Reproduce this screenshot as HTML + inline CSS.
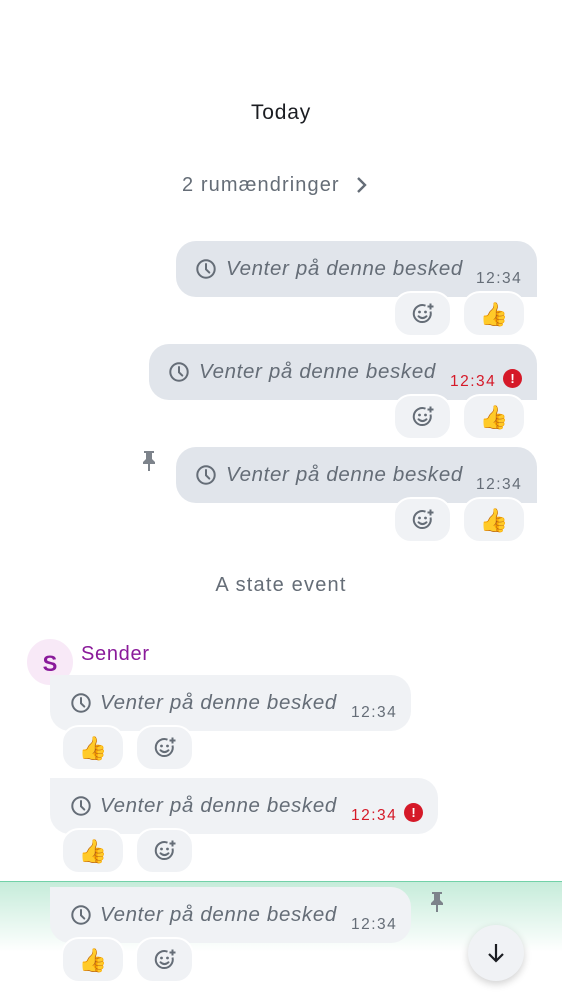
<!DOCTYPE html>
<html><head><meta charset="utf-8"><style>
*{margin:0;padding:0;box-sizing:border-box}
body{width:562px;height:1000px;background:#fff;position:relative;overflow:hidden;font-family:"Liberation Sans",sans-serif}
.a{position:absolute}
.b{position:absolute;height:56px;background:#e1e5eb;border-radius:20px 20px 0 20px}
.bi{background:#f0f2f5;border-radius:0 20px 20px 20px}
.t{position:absolute;top:16px;font-style:italic;font-size:20.5px;color:#656d77;white-space:nowrap;letter-spacing:.65px}
.tm{position:absolute;top:29px;font-size:15.5px;color:#656d77;letter-spacing:1.5px}
.red{color:#d51928}
.clk{position:absolute;top:17px}
.p{position:absolute;height:46px;background:#f0f2f5;border:2px solid #fff;border-radius:18px;display:flex;align-items:center;justify-content:center;font-size:23px}
.err{position:absolute;width:19px;height:19px;border-radius:50%;background:#d51928;color:#fff;font-size:13px;font-weight:bold;text-align:center;line-height:19px}
</style></head><body>
<svg width="0" height="0" style="position:absolute"><defs>
<symbol id="clk" viewBox="0 0 22 22"><circle cx="11" cy="11" r="8.7" fill="none" stroke="#656d77" stroke-width="2"/><path d="M11 6v5.3l3.3 3.3" fill="none" stroke="#656d77" stroke-width="2" stroke-linecap="round"/></symbol>
<symbol id="smi" viewBox="0 0 24 24"><path d="M19.5 9.5A8.5 8.5 0 1 1 14.5 3.7" fill="none" stroke="#656d77" stroke-width="2"/><circle cx="8.5" cy="10" r="1.4" fill="#656d77"/><circle cx="14.5" cy="10" r="1.4" fill="#656d77"/><path d="M7.5 14.3q4 3.6 8 0" fill="none" stroke="#656d77" stroke-width="2" stroke-linecap="round"/><path d="M19.5 1.5v6M16.5 4.5h6" stroke="#656d77" stroke-width="2"/></symbol>
<symbol id="pin" viewBox="0 0 20 24"><path d="M5 2h10v2h-2v6l3 3v2H11v7H9v-7H4v-2l3-3V4H5z" fill="#7d838b"/></symbol>
</defs></svg>

<div class="a" style="left:0;width:562px;top:101px;text-align:center;font-size:21px;color:#1b1d22;letter-spacing:.8px">Today</div>
<div class="a" style="left:182px;top:174px;font-size:20px;color:#656d77;letter-spacing:1.1px">2 rumændringer</div>
<svg class="a" style="left:353px;top:176px" width="16" height="18" viewBox="0 0 16 18"><path d="M5 2l7 7-7 7" fill="none" stroke="#656d77" stroke-width="2.4"/></svg>

<div class="b" style="left:176px;top:241px;width:361px"><svg class="clk" style="left:19px" width="22" height="22"><use href="#clk"/></svg><div class="t" style="left:50px">Venter på denne besked</div><div class="tm" style="left:300px">12:34</div></div>
<div class="p" style="left:393px;top:291px;width:59px"><svg width="24" height="24"><use href="#smi"/></svg></div>
<div class="p" style="left:462px;top:291px;width:64px">👍</div>

<div class="b" style="left:149px;top:344px;width:388px"><svg class="clk" style="left:19px" width="22" height="22"><use href="#clk"/></svg><div class="t" style="left:50px">Venter på denne besked</div><div class="tm red" style="left:301px">12:34</div><div class="err" style="left:354px;top:25px">!</div></div>
<div class="p" style="left:393px;top:394px;width:59px"><svg width="24" height="24"><use href="#smi"/></svg></div>
<div class="p" style="left:462px;top:394px;width:64px">👍</div>

<svg class="a" style="left:139px;top:449px" width="20" height="24"><use href="#pin"/></svg>
<div class="b" style="left:176px;top:447px;width:361px"><svg class="clk" style="left:19px" width="22" height="22"><use href="#clk"/></svg><div class="t" style="left:50px">Venter på denne besked</div><div class="tm" style="left:300px">12:34</div></div>
<div class="p" style="left:393px;top:497px;width:59px"><svg width="24" height="24"><use href="#smi"/></svg></div>
<div class="p" style="left:462px;top:497px;width:64px">👍</div>

<div class="a" style="left:0;width:562px;top:574px;text-align:center;font-size:20px;color:#656d77;letter-spacing:1.2px">A state event</div>

<div class="a" style="left:25px;top:637px;width:50px;height:50px;border-radius:50%;background:#f8e9f7;color:#8a1a9a;font-size:22px;font-weight:bold;text-align:center;line-height:50px;border:2px solid #fff">S</div>
<div class="a" style="left:81px;top:643px;font-size:20px;color:#8a1a9a;letter-spacing:.7px">Sender</div>

<div class="b bi" style="left:50px;top:675px;width:361px"><svg class="clk" style="left:20px" width="22" height="22"><use href="#clk"/></svg><div class="t" style="left:50px">Venter på denne besked</div><div class="tm" style="left:301px">12:34</div></div>
<div class="p" style="left:61px;top:725px;width:64px">👍</div>
<div class="p" style="left:135px;top:725px;width:59px"><svg width="24" height="24"><use href="#smi"/></svg></div>

<div class="b bi" style="left:50px;top:778px;width:388px"><svg class="clk" style="left:20px" width="22" height="22"><use href="#clk"/></svg><div class="t" style="left:50px">Venter på denne besked</div><div class="tm red" style="left:301px">12:34</div><div class="err" style="left:354px;top:25px">!</div></div>
<div class="p" style="left:61px;top:828px;width:64px">👍</div>
<div class="p" style="left:135px;top:828px;width:59px"><svg width="24" height="24"><use href="#smi"/></svg></div>

<div class="a" style="left:0;top:881px;width:562px;height:80px;border-top:1.5px solid #72d1a8;background:linear-gradient(#c6ecda,#fff 70px)"></div>
<div class="b bi" style="left:50px;top:887px;width:361px"><svg class="clk" style="left:20px" width="22" height="22"><use href="#clk"/></svg><div class="t" style="left:50px">Venter på denne besked</div><div class="tm" style="left:301px">12:34</div></div>
<svg class="a" style="left:427px;top:890px" width="20" height="24"><use href="#pin"/></svg>
<div class="p" style="left:61px;top:937px;width:64px">👍</div>
<div class="p" style="left:135px;top:937px;width:59px"><svg width="24" height="24"><use href="#smi"/></svg></div>

<div class="a" style="left:468px;top:925px;width:56px;height:56px;border-radius:50%;background:#f0f2f5;box-shadow:0 3px 8px rgba(0,0,0,.18);display:flex;align-items:center;justify-content:center"><svg width="24" height="24" viewBox="0 0 24 24"><path d="M12 3v17M5 13l7 7 7-7" fill="none" stroke="#1b1d22" stroke-width="2.2"/></svg></div>
</body></html>
